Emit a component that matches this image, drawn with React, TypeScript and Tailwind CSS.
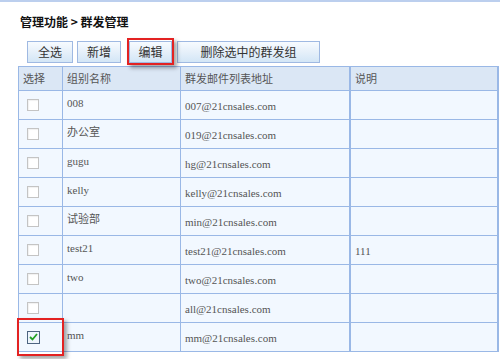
import React from "react";

const rows: { name: string; email: string; desc: string; checked?: boolean }[] = [
  { name: "008", email: "007@21cnsales.com", desc: "" },
  { name: "办公室", email: "019@21cnsales.com", desc: "" },
  { name: "gugu", email: "hg@21cnsales.com", desc: "" },
  { name: "kelly", email: "kelly@21cnsales.com", desc: "" },
  { name: "试验部", email: "min@21cnsales.com", desc: "" },
  { name: "test21", email: "test21@21cnsales.com", desc: "111" },
  { name: "two", email: "two@21cnsales.com", desc: "" },
  { name: "", email: "all@21cnsales.com", desc: "" },
  { name: "mm", email: "mm@21cnsales.com", desc: "", checked: true },
];

function Btn({ label, w, ml }: { label: string; w: string; ml: string }) {
  return (
    <div
      className={`${w} ${ml} h-[22px] flex items-center justify-center border border-[#9fb9e2] bg-gradient-to-b from-[#f7fbff] via-[#e6f0fa] to-[#d3e6f6] text-[12px] text-[#333]`}
    >
      {label}
    </div>
  );
}

function Check({ checked }: { checked?: boolean }) {
  if (checked) {
    return (
      <div className="w-[13px] h-[13px] border border-[#4d6480] bg-[#eef5fc] flex items-center justify-center">
        <svg width="9" height="8" viewBox="0 0 9 8">
          <path d="M1 4 L3.5 6.5 L8 1" fill="none" stroke="#23a023" strokeWidth="1.8" />
        </svg>
      </div>
    );
  }
  return <div className="w-[12px] h-[12px] border border-[#c4c4c4] bg-white shadow-[inset_1px_1px_1px_rgba(0,0,0,0.06)]" />;
}

export default function App() {
  return (
    <div
      className="relative w-[500px] h-[359px] overflow-hidden bg-white border-t-2 border-[#bccfee]"
      style={{ fontFamily: '"Noto Sans CJK SC", "Liberation Sans", sans-serif' }}
    >
      <div className="mt-[12px] ml-[20px] h-4 leading-4 text-[12px] font-bold text-[#111]">
        管理功能 &gt; 群发管理
      </div>
      <div className="mt-[11px] flex">
        <Btn label="全选" w="w-[46px]" ml="ml-[27px]" />
        <Btn label="新增" w="w-[44px]" ml="ml-[4px]" />
        <Btn label="编辑" w="w-[43px]" ml="ml-[8px]" />
        <Btn label="删除选中的群发组" w="w-[143px]" ml="ml-[5px]" />
      </div>
      <div className="mt-[3px] ml-[18px] w-[481px] border-t border-l border-[#9ab8e6] text-[11px] text-[#555]">
        <div className="flex h-[24px] bg-[#dbe7f5] border-b border-[#9ab8e6]">
          <div className="w-[44px] shrink-0 border-r border-[#9ab8e6] pl-[4px] flex items-center">选择</div>
          <div className="w-[118px] shrink-0 border-r border-[#9ab8e6] pl-[4px] flex items-center">组别名称</div>
          <div className="w-[170px] shrink-0 border-r-2 border-[#9ab8e6] pl-[4px] flex items-center">群发邮件列表地址</div>
          <div className="w-[148px] shrink-0 border-r-2 border-[#9ab8e6] pl-[4px] flex items-center">说明</div>
        </div>
        {rows.map((r, i) => (
          <div key={i} className="flex h-[29px] bg-[#f2f8ff] border-b border-[#9ab8e6]">
            <div className="w-[44px] shrink-0 border-r border-[#9ab8e6] pl-[8px] flex items-center">
              <Check checked={r.checked} />
            </div>
            <div
              className="w-[118px] shrink-0 border-r border-[#9ab8e6] pl-[4px] pb-[4px] flex items-center"
              style={{ fontFamily: '"Liberation Serif", "Noto Sans CJK SC", serif' }}
            >
              {r.name}
            </div>
            <div
              className="w-[170px] shrink-0 border-r-2 border-[#9ab8e6] pl-[4px] pt-[3px] flex items-center"
              style={{ fontFamily: '"Liberation Serif", "Noto Sans CJK SC", serif' }}
            >
              {r.email}
            </div>
            <div
              className="w-[148px] shrink-0 border-r-2 border-[#9ab8e6] pl-[4px] pt-[3px] flex items-center"
              style={{ fontFamily: '"Liberation Serif", "Noto Sans CJK SC", serif' }}
            >
              {r.desc}
            </div>
          </div>
        ))}
      </div>
      <div className="absolute left-[127px] top-[36px] w-[47px] h-[27px] border-2 border-[#e32222] shadow-[3px_3px_4px_rgba(0,0,0,0.35)]" />
      <div className="absolute left-[17px] top-[316px] w-[47px] h-[38px] border-2 border-[#e32222] shadow-[3px_3px_4px_rgba(0,0,0,0.35)]" />
    </div>
  );
}
